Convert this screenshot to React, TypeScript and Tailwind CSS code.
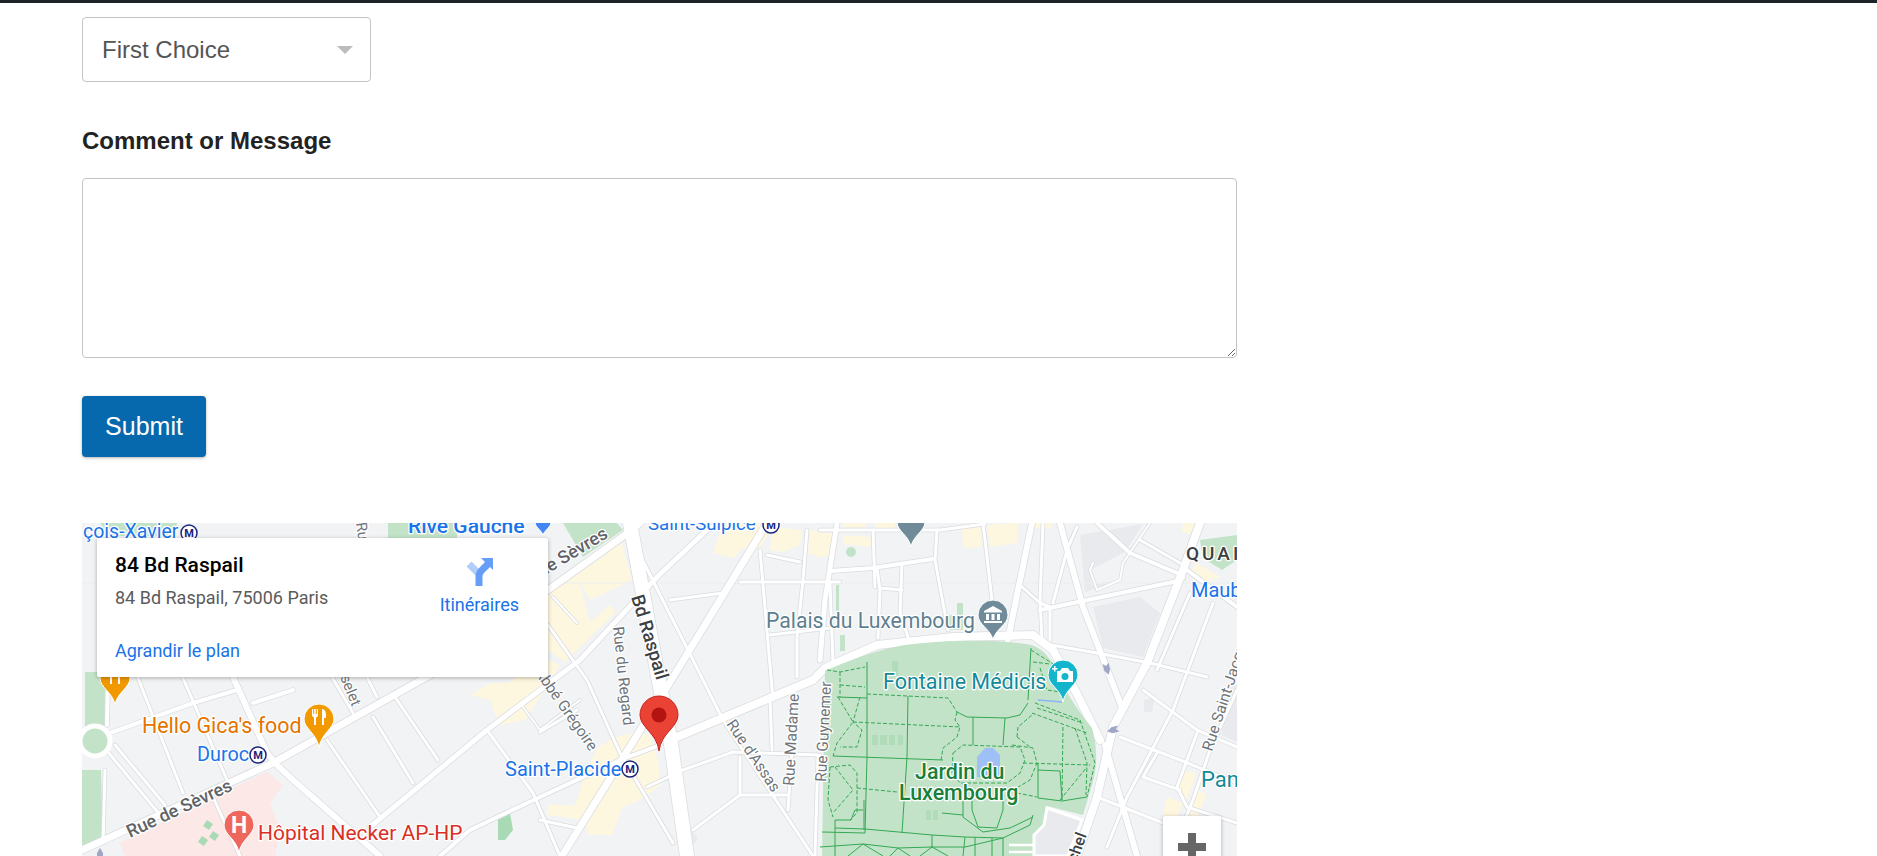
import React from "react";

// roads in page coordinates, the svg viewBox starts at the map's corner (82,523)
const roads: [number, string][] = [
  [4, "108,672 107,725"],
  [4, "110,733 193,703 237,690"],
  [4, "253,703 293,690"],
  [3, "115,745 165,805"],
  [3, "108,752 160,815"],
  [3, "105,770 103,843"],
  [3, "138,678 183,793"],
  [3, "183,678 227,780"],
  [6, "233,677 267,753 277,765 293,780 380,856"],
  [3, "327,740 380,817"],
  [3, "373,717 413,783"],
  [3, "395,697 438,760"],
  [3, "367,677 377,697"],
  [3, "332,677 353,713"],
  [3, "213,797 240,856"],
  [3, "487,730 533,793 560,856"],
  [2, "520,703 540,730 580,700"],
  [3, "548,625 587,680 620,753 640,787 673,843"],
  [2, "553,597 577,623"],
  [3, "540,732 577,710"],
  [3, "540,820 577,828"],
  [5, "370,827 487,730 580,660 657,577 707,530 720,523"],
  [7, "82,850 273,763 380,703 430,675 548,590 625,535 640,523"],
  [4, "660,745 620,760 540,797 470,830 440,856"],
  [7, "767,523 667,687 562,856"],
  [3, "640,555 703,680 723,720 813,856"],
  [3, "670,600 723,593"],
  [3, "740,582 840,582"],
  [3, "760,550 773,700"],
  [3, "770,635 830,628"],
  [3, "767,555 800,562"],
  [3, "807,530 803,580 797,637 797,677"],
  [3, "830,583 833,663"],
  [3, "683,770 733,752 820,755"],
  [3, "647,787 683,770"],
  [3, "693,830 740,795 788,795"],
  [3, "740,757 740,795"],
  [3, "770,700 772,750"],
  [3, "795,687 792,750 788,810"],
  [3, "818,756 815,856"],
  [5, "837,523 825,600 820,660"],
  [3, "873,530 875,587"],
  [3, "877,568 880,590 878,638"],
  [3, "902,563 900,613 908,637"],
  [3, "880,588 902,590"],
  [3, "820,530 940,530 985,524"],
  [4, "830,571 873,568 933,559"],
  [3, "937,530 935,560 948,630"],
  [3, "983,523 992,600 995,632"],
  [6, "1032,523 1018,590 1008,640"],
  [3, "1043,523 1040,600 1042,640"],
  [3, "1020,585 1040,603 1050,607"],
  [6, "1060,523 1083,607 1123,710"],
  [4, "1040,610 1173,582 1183,578"],
  [4, "1187,570 1237,607"],
  [4, "1097,523 1130,553 1177,573"],
  [2, "1150,523 1123,563 1120,580 1097,590 1090,570 1093,563"],
  [3, "1140,540 1180,563"],
  [3, "1053,603 1067,550 1077,527"],
  [3, "1050,607 1050,640"],
  [3, "1040,643 1097,653 1150,663 1207,677"],
  [3, "1190,593 1157,670"],
  [3, "1213,603 1173,710 1127,797 1107,847"],
  [3, "1143,690 1197,730 1237,747"],
  [3, "1120,737 1180,760 1237,783"],
  [3, "1197,733 1177,787 1187,807 1237,823"],
  [3, "1157,753 1143,777 1180,790"],
  [3, "1097,797 1163,823"],
  [6, "1105,745 1137,856"],
  [3, "1237,690 1210,750 1193,800 1170,856"],
  [8, "1200,523 1183,570 1147,663 1113,727 1097,797 1077,856"],
  [8, "677,737 813,680 825,668 877,645 953,637 1033,635 1053,650 1075,690 1100,740"],
  [14, "630,523 660,687 670,737 687,856"],
];

const solidPaths = [
  "867,662 867,757 865,833",
  "908,696 907,757 902,833",
  "837,697 867,698",
  "833,756 943,760",
  "973,717 973,745",
  "1005,718 1003,745",
  "957,712 967,717 1007,718 1020,715 1028,703",
  "1031,648 1028,700",
  "972,793 972,810 978,827 997,828 1003,810 1003,793",
  "963,800 963,817 983,832 1010,828 1033,817",
  "942,813 963,815",
  "1038,763 1038,798 1062,801 1087,797",
  "1038,770 1060,771 1062,800",
  "835,828 865,829 932,835 965,837 1003,838 1030,825 1033,815",
  "822,832 865,833",
  "820,847 863,844 898,848 932,847 965,847 1003,838",
  "932,835 932,847",
  "965,837 963,856",
  "975,837 975,856",
  "992,838 992,856",
  "1003,838 1003,856",
  "863,844 883,856",
  "863,844 848,856",
  "898,848 890,856",
  "898,848 910,856",
  "932,847 920,856",
  "932,847 948,856",
  "835,820 835,856",
  "835,820 851,820 855,810 863,810",
  "864,800 864,830",
];

const dashedPaths = [
  "827,670 840,672 865,667",
  "840,672 840,697",
  "840,685 865,687",
  "867,694 948,698 957,712",
  "838,697 853,722 837,743 833,756",
  "860,697 853,722 862,730 857,747 840,747",
  "853,722 960,727 957,737 943,748 941,760",
  "957,712 955,720 960,727",
  "953,753 963,745 1020,747 1025,760 1020,773 1007,783 960,783 952,773 953,753",
  "1012,745 1033,748 1037,763 1030,780 1010,792",
  "1017,737 1018,727 1032,715",
  "1017,737 1030,747",
  "1023,763 1090,765",
  "1063,727 1062,800",
  "1032,713 1087,733",
  "1035,703 1080,720 1095,763 1087,797",
  "1037,708 1083,723",
  "1075,728 1087,763 1086,795",
  "1060,800 1087,767",
  "1031,650 1055,665",
  "1033,662 1050,664",
  "1040,668 1047,690 1060,692",
  "857,788 897,792",
  "1017,793 1037,797",
  "830,767 850,765 857,773 857,813 850,820",
  "830,767 828,800 833,817",
  "835,767 853,790 833,813",
];

const yellow = [
  "548,590 620,538 632,580 590,600 578,578 590,622 610,605 616,612 565,662 548,650",
  "470,695 490,683 508,683 530,667 548,660 560,665 525,720 500,725 490,700",
  "720,533 713,553 733,558 743,548 760,548 773,527 760,523 722,523",
  "773,527 802,530 800,545 783,552 770,550",
  "810,530 833,535 827,543 820,557 808,553",
  "843,535 870,537 872,547 843,544",
  "843,523 865,523 865,528 843,527",
  "875,523 895,523 895,528 875,528",
  "820,533 833,533 830,555 820,558",
  "962,527 980,525 982,547 963,548",
  "987,525 1017,523 1017,543 990,547",
  "1030,523 1052,523 1050,528 1030,528",
  "547,805 575,805 585,775 597,748 615,737 635,733 650,735 658,760 660,785 645,797 622,808 612,835 588,835 585,820 547,815",
  "1180,770 1197,773 1186,800 1178,790",
  "1197,790 1207,795 1196,820 1188,812",
  "1167,797 1183,803 1177,818 1163,815",
  "1197,563 1220,577 1205,583 1190,572",
  "1183,523 1195,523 1190,534 1182,532",
];

const buildings = [
  "1080,535 1143,524 1125,552 1090,570 1092,585 1120,580 1085,592",
  "1093,607 1140,597 1160,613 1143,657 1103,648",
  "1047,810 1080,820 1067,856 1037,856",
  "1225,690 1237,685 1237,742 1222,735",
  "1144,700 1155,697 1152,712 1144,712",
  "688,828 698,838 690,850 680,842",
];

function Label({ x, y, children, size = 16, fill = "#1a73e8", rot = 0, weight = 400, anchor = "start", spacing }: {
  x: number; y: number; children: React.ReactNode; size?: number; fill?: string; rot?: number; weight?: number; anchor?: "start" | "end" | "middle"; spacing?: number;
}) {
  return (
    <text
      x={x}
      y={y}
      fontSize={size}
      fontWeight={weight}
      fill={fill}
      textAnchor={anchor}
      letterSpacing={spacing}
      stroke="#fff"
      strokeWidth={2.5}
      strokeLinejoin="round"
      paintOrder="stroke"
      transform={rot ? `rotate(${rot} ${x} ${y})` : undefined}
    >
      {children}
    </text>
  );
}

function Pin({ x, y, tip, r = 15, fill, stroke = "#fff", sw = 1 }: { x: number; y: number; tip: number; r?: number; fill: string; stroke?: string; sw?: number }) {
  return (
    <path
      d={`M${x} ${tip}C${x - 2} ${y + r * 0.95} ${x - r} ${y + r * 0.65} ${x - r} ${y}A${r} ${r} 0 1 1 ${x + r} ${y}C${x + r} ${y + r * 0.65} ${x + 2} ${y + r * 0.95} ${x} ${tip}Z`}
      fill={fill}
      stroke={stroke}
      strokeWidth={sw}
    />
  );
}

function Metro({ x, y }: { x: number; y: number }) {
  return (
    <g>
      <circle cx={x} cy={y} r={8} fill="#fff" stroke="#1a237e" strokeWidth={1.5} />
      <text x={x} y={y + 4} fontSize={11} fontWeight={700} fill="#1a237e" textAnchor="middle">M</text>
    </g>
  );
}

function Cutlery({ x, y }: { x: number; y: number }) {
  return (
    <path
      d={`M${x - 7} ${y - 8}v6a2.5 2.5 0 0 0 2 2.5V${y + 8}h2V${y + 0.5}a2.5 2.5 0 0 0 2-2.5v-6h-1.2v5h-1v-5h-1.6v5h-1v-5zM${x + 3} ${y + 8}V${y - 8}c3 0 4 3 4 6v3h-2v7z`}
      fill="#fff"
    />
  );
}

function Arrow({ x, y, rot }: { x: number; y: number; rot: number }) {
  return (
    <path d="M-3 -6l3 3 3 -3v7l-3 5 -3 -5z" fill="#9fa6c8" transform={`translate(${x} ${y}) rotate(${rot})`} />
  );
}

function MapDrawing() {
  return (
    <svg viewBox="82 523 1155 333" className="block h-full w-full font-[Roboto,sans-serif]">
      <rect x="82" y="523" width="1155" height="333" fill="#f1f3f4" />
      {yellow.map((p) => <polygon key={p} points={p} fill="#fef7e0" />)}
      {buildings.map((p) => <polygon key={p} points={p} fill="#e8eaed" />)}

      {/* hospital */}
      <polygon points="120,843 213,797 267,772 283,785 270,803 280,830 275,856 125,856" fill="#fce8e6" />
      <path d="M207 820l6 4-4 6-6-4zM213 831l6 4-4 6-6-4zM202 836l6 4-4 6-6-4z" fill="#a8dab5" />

      {/* small green bits */}
      <path d="M85 672h23l-2 55-21 0zM82 770h19l2 73-21 3z" fill="#c3e3c9" />
      <polygon points="100,523 177,523 175,536 110,536" fill="#c3e3c9" />
      <rect x="388" y="523" width="69" height="15" fill="#c3e3c9" />
      <polygon points="563,523 583,557 623,530 617,523" fill="#c3e3c9" />
      <polygon points="1200,540 1237,535 1237,560 1222,570 1203,558" fill="#c3e3c9" />
      <polygon points="498,815 510,813 513,830 505,840 498,840" fill="#a8dab5" />
      <circle cx="851" cy="552" r="5" fill="#c3e3c9" />
      <path d="M836 585h3v28h-3zM957 603h6v12h-6zM947 615h16v15h-16zM840 635h5v16h-5z" fill="#c3e3c9" />

      <line x1="82" y1="583" x2="1237" y2="583" stroke="#eceef0" strokeWidth="1" />

      {/* casing under the white road */}
      {roads.map(([w, p]) => (
        <polyline key={`c${p}`} points={p} fill="none" stroke="#dadce0" strokeWidth={w + 1.5} strokeLinejoin="round" strokeLinecap="round" />
      ))}
      {roads.map(([w, p]) => (
        <polyline key={p} points={p} fill="none" stroke="#fff" strokeWidth={w} strokeLinejoin="round" strokeLinecap="round" />
      ))}
      <circle cx="95" cy="741" r="15" fill="#c3e3c9" stroke="#fff" strokeWidth="5" />

      {/* Jardin du Luxembourg */}
      <path
        d="M825 671C845 662 875 650 905 645C945 640 1000 639 1031 645C1047 650 1055 665 1062 682C1070 700 1082 715 1092 728C1097 745 1098 765 1092 785L1083 815L1047 806L1038 856L822 856Z"
        fill="#c3e3c9"
      />
      <path d="M872 735h6v10h-6zM880 735h7v10h-7zM889 735h6v10h-6zM898 735h5v10h-5zM892 661h6v14h-6zM926 810h5v10h-5zM933 810h5v10h-5z" fill="#b0dcb9" />
      <polygon points="977,757 985,748 993,748 1000,755 1000,777 977,777" fill="#9ec0f7" />
      <line x1="1038" y1="700" x2="1062" y2="702" stroke="#8ab4f8" strokeWidth="1.5" />
      {solidPaths.map((p) => <polyline key={p} points={p} fill="none" stroke="#34a853" strokeWidth="1" />)}
      {dashedPaths.map((p) => <polyline key={p} points={p} fill="none" stroke="#34a853" strokeWidth="1" strokeDasharray="4 2" />)}

      {/* block cut out of the park corner */}
      <polygon points="1047,808 1082,820 1068,856 1034,856 1034,835 1044,825" fill="#e8eaed" stroke="#fff" strokeWidth="3" />
      <path d="M1009 845h24M1009 852h24" stroke="#fff" strokeWidth="2.5" fill="none" />

      <Arrow x={1107} y={669} rot={-15} />
      <Arrow x={1113} y={730} rot={75} />
      <Arrow x={100} y={854} rot={180} />

      {/* labels */}
      <Label x={83} y={538} size={19.5}>çois-Xavier</Label>
      <Metro x={189} y={533} />
      <Label x={408} y={533} size={21} weight={500}>Rive Gauche</Label>
      <Label x={648} y={530} size={18.6}>Saint-Sulpice</Label>
      <Metro x={771} y={525} />
      <Label x={142} y={733} size={21.4} fill="#e37400">Hello Gica's food</Label>
      <Label x={197} y={761} size={19.8}>Duroc</Label>
      <Metro x={258} y={755} />
      <Label x={130} y={838} size={18} fill="#5f6368" weight={500} rot={-25}>Rue de Sèvres</Label>
      <Label x={258} y={840} size={21} fill="#d93025">Hôpital Necker AP-HP</Label>
      <Label x={505} y={776} size={20}>Saint-Placide</Label>
      <Metro x={630} y={769} />
      <Label x={352} y={707} size={15} fill="#70757a" rot={68} anchor="end">Rue Rousselet</Label>
      <Label x={356} y={523} size={15} fill="#70757a" rot={82}>Ru</Label>
      <Label x={609} y={537} size={18} fill="#5f6368" weight={500} rot={-31} anchor="end">Rue de Sèvres</Label>
      <Label x={631} y={597} size={18.5} fill="#3c4043" weight={500} rot={73}>Bd Raspail</Label>
      <Label x={613} y={627} size={15.4} fill="#70757a" rot={84}>Rue du Regard</Label>
      <Label x={590} y={752} size={15.4} fill="#70757a" rot={55} anchor="end">Rue de l'Abbé Grégoire</Label>
      <Label x={726} y={724} size={15.5} fill="#70757a" rot={56}>Rue d'Assas</Label>
      <Label x={794} y={786} size={15.7} fill="#70757a" rot={-87}>Rue Madame</Label>
      <Label x={826} y={782} size={15.5} fill="#70757a" rot={-87}>Rue Guynemer</Label>
      <Label x={766} y={628} size={21.2} fill="#5f7f8f">Palais du Luxembourg</Label>
      <Label x={883} y={689} size={21.5} fill="#12899b">Fontaine Médicis</Label>
      <Label x={915} y={779} size={21.4} fill="#188038" weight={500}>Jardin du</Label>
      <Label x={899} y={800} size={21.4} fill="#188038" weight={500}>Luxembourg</Label>
      <Label x={1186} y={560} size={19} fill="#3c4043" weight={500} spacing={3}>QUAI</Label>
      <Label x={1191} y={597} size={20}>Maubert</Label>
      <Label x={1201} y={787} size={22} fill="#12899b">Panthéon</Label>
      <Label x={1212} y={752} size={15.5} fill="#70757a" rot={-72}>Rue Saint-Jacques</Label>
      <Label x={1087} y={835} size={16} fill="#3c4043" weight={500} rot={-70} anchor="end">Bd Saint-Michel</Label>

      {/* markers */}
      <Pin x={115} y={678} tip={705} fill="#f29900" />
      <Cutlery x={115} y={676} />
      <Pin x={319} y={719} tip={748} fill="#f29900" />
      <Cutlery x={319} y={717} />
      <Pin x={239} y={825} tip={853} fill="#ee675c" />
      <text x={239} y={833} fontSize={23} fontWeight={700} fill="#fff" textAnchor="middle">H</text>
      <Pin x={911} y={522} tip={547} r={14} fill="#6f8a99" />
      <Pin x={543} y={522} tip={535} r={8} fill="#4285f4" />
      <Pin x={993} y={615} tip={640} fill="#6f8a99" />
      <path d="M993 606l9 5v1.5h-18v-1.5zM986 614h3v6h-3zM991.5 614h3v6h-3zM997 614h3v6h-3zM984 621h18v2h-18z" fill="#fff" />
      <Pin x={1063} y={675} tip={702} fill="#12b5cb" />
      <path d="M1057 671h3l2-3h6l2 3h3v11h-16zM1052 668h2v-2h1.5v2h2v1.5h-2v2h-1.5v-2h-2z" fill="#fff" />
      <circle cx="1065" cy="676.5" r="3.5" fill="#12b5cb" />
      <Pin x={659} y={715} tip={751} r={19} fill="#ea4335" stroke="#c5221f" />
      <circle cx="659" cy="715" r="7.5" fill="#b31412" />
    </svg>
  );
}

export default function App() {
  return (
    <div className="h-[856px] overflow-hidden bg-white [font-family:'Liberation_Sans',Arial,sans-serif] text-[#222]">
      <div className="h-[3px] bg-[#1c2329]"></div>
      <div className="w-[1237px] pl-[82px]">
        <div className="relative mt-[14px] flex h-[65px] w-[289px] items-center rounded-[4px] border border-[#c4c4c4] bg-white pl-[19px] text-[24px] text-[#555]">
          First Choice
          <div className="absolute left-[254px] top-[28px] h-0 w-0 border-x-[8px] border-t-[8px] border-x-transparent border-t-[#bbb]"></div>
        </div>

        <label className="mt-[42px] block text-[24px] font-bold leading-[34px]">Comment or Message</label>
        <textarea className="mt-[20px] block h-[180px] w-full rounded-[4px] border border-[#c4c4c4] bg-white"></textarea>

        <button type="submit" className="mt-[38px] block h-[61px] w-[124px] rounded-[4px] bg-[#0769ad] text-[25px] text-white shadow-[0_1px_3px_rgba(0,0,0,0.3)]">
          Submit
        </button>

        <div className="relative mt-[66px] h-[333px] w-full overflow-hidden">
          <MapDrawing />

          <div className="absolute left-[15px] top-[15px] flex h-[139px] w-[451px] justify-between rounded-[2px] bg-white pl-[18px] pr-[29px] pt-[15px] font-[Roboto,sans-serif] shadow-[0_1px_4px_rgba(0,0,0,0.3)]">
            <div>
              <div className="text-[21px] font-medium leading-[24px] text-black">84 Bd Raspail</div>
              <div className="mt-[10px] text-[18px] leading-[22px] text-[#5b5b5b]">84 Bd Raspail, 75006 Paris</div>
              <div className="mt-[31px] text-[18px] leading-[22px] text-[#1a73e8]">Agrandir le plan</div>
            </div>
            <div className="flex flex-col items-center pt-[5px]">
              <svg width="27" height="28" viewBox="0 0 27 28">
                <path d="M3 6l9 9" stroke="#b3cdfb" strokeWidth="7" fill="none" />
                <path d="M13 28V18C13 14 16 12 18 10L22 6" stroke="#669df6" strokeWidth="7" fill="none" />
                <path d="M15 0h12v12z" fill="#669df6" />
              </svg>
              <div className="mt-[8px] text-[18px] leading-[22px] text-[#1a73e8]">Itinéraires</div>
            </div>
          </div>

          <div className="absolute left-[1081px] top-[293px] flex h-[62px] w-[58px] items-center justify-center rounded-[2px] bg-white shadow-[0_1px_4px_rgba(0,0,0,0.3)]">
            <svg width="28" height="28" viewBox="0 0 28 28">
              <path d="M10 0h8v10h10v8H18v10h-8V18H0v-8h10z" fill="#666" />
            </svg>
          </div>
        </div>
      </div>
    </div>
  );
}
